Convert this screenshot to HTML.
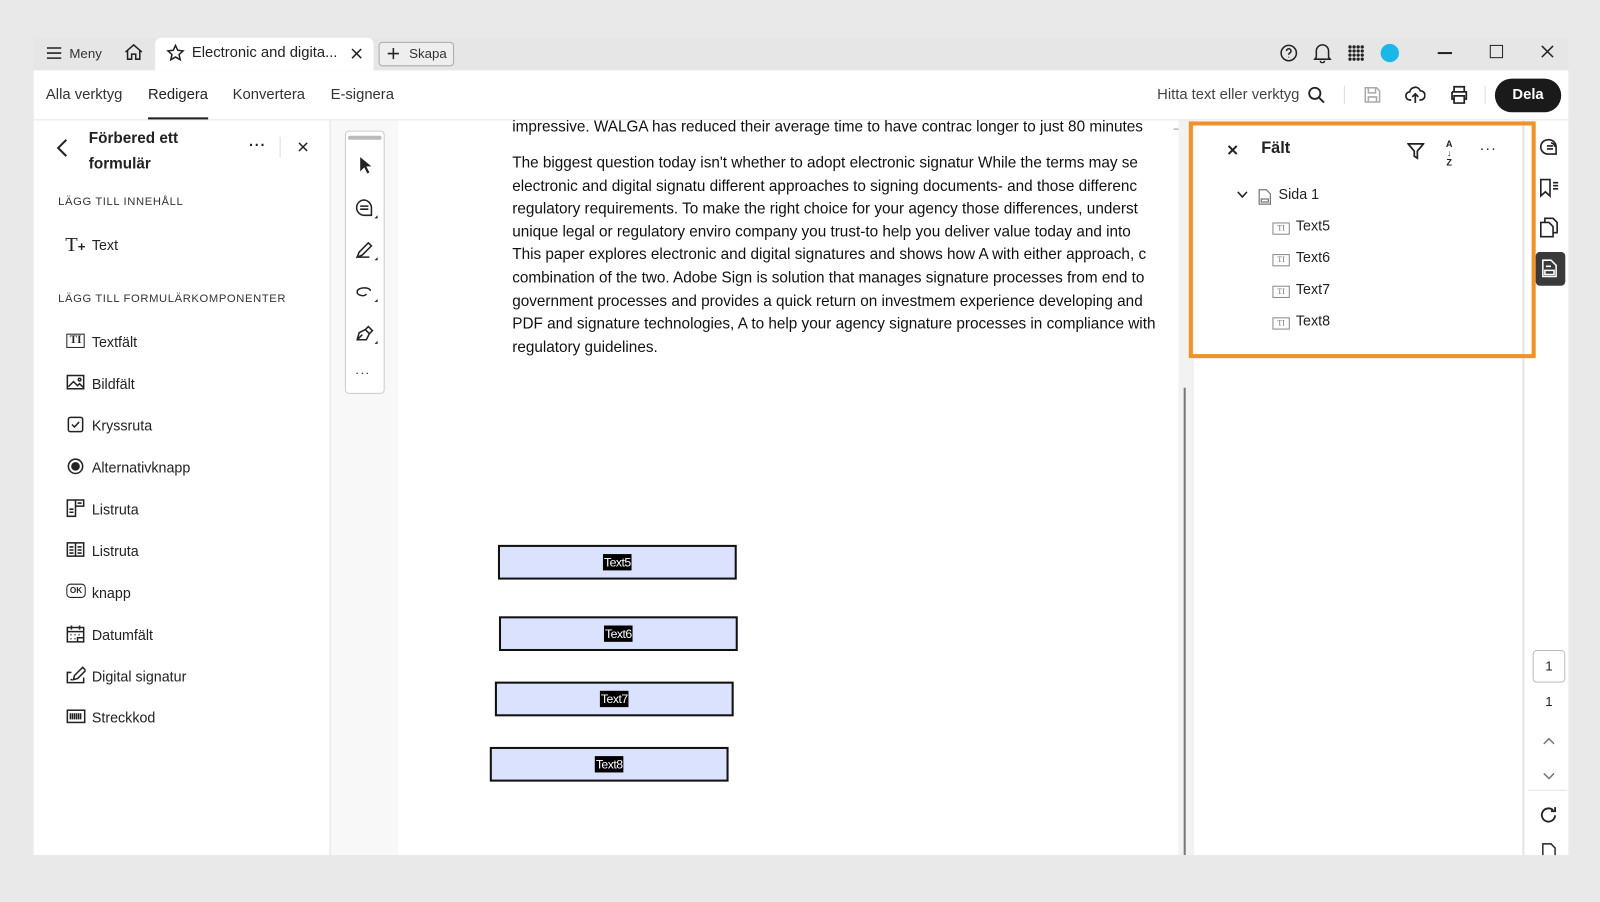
<!DOCTYPE html>
<html><head><meta charset="utf-8"><style>
*{box-sizing:border-box;margin:0;padding:0}
body{width:1600px;height:884px;background:#e9e9e9;font-family:"Liberation Sans",sans-serif;overflow:hidden;color:#222}
#w{position:absolute;left:0;top:0;width:1568px;height:866px;transform:scale(1.0204);transform-origin:0 0}
.abs{position:absolute}
svg{display:block}
.ic{position:absolute;fill:none;stroke:#222;stroke-width:1.5}
.li{position:absolute;left:90px;font-size:14px;color:#222}
.doc{position:absolute;left:502px;width:651px;font-family:"Liberation Sans",sans-serif;font-size:15px;color:#111;white-space:nowrap;overflow:hidden;line-height:22.6px}
.fld{position:absolute;height:34px;background:#dbe2fd;border:2px solid #111}
.fld span{position:absolute;left:50%;top:50%;transform:translate(-50%,-50%);background:#000;color:#fff;font-size:12px;padding:1px 1px;letter-spacing:-.5px}
.tr{position:absolute;left:1270px;font-size:14px;color:#222}
.tic{position:absolute;left:1247px;width:17px;height:12px;border:1.3px solid #888;font-size:8px;color:#777;text-align:center;line-height:9px;font-family:"Liberation Serif",serif}
</style></head><body><div id="w">
<div class="abs" style="left:33px;top:37px;width:1504px;height:32px;background:#e6e6e6"></div>
<div class="abs" style="left:33px;top:69px;width:1504px;height:49px;background:#fff;border-bottom:1px solid #e2e2e2"></div>
<div class="abs" style="left:152px;top:37px;width:214px;height:32px;background:#fff;border-radius:6px 6px 0 0"></div>
<svg class="ic" style="left:45px;top:45px" width="16" height="14"><path d="M1 2h14M1 7h14M1 12h14"/></svg>
<div class="abs" style="left:68px;top:45px;font-size:13px;color:#333">Meny</div>
<svg class="ic" style="left:121px;top:42px" width="20" height="18"><path d="M2 9L10 2l8 7M4 7v9h4v-5h4v5h4V7"/></svg>
<svg class="ic" style="left:163px;top:43px" width="18" height="18"><path d="M9 1.5l2.2 4.8 5.2.6-3.9 3.5 1.1 5.1L9 12.9l-4.6 2.6 1.1-5.1L1.6 6.9l5.2-.6z"/></svg>
<div class="abs" style="left:188px;top:44px;font-size:14.5px;color:#222">Electronic and digita...</div>
<svg class="ic" style="left:344px;top:47px" width="11" height="11"><path d="M1 1l9 9M10 1l-9 9"/></svg>
<div class="abs" style="left:371px;top:41px;width:74px;height:24px;border:1px solid #aaa;border-radius:4px;background:#eee"></div>
<svg class="ic" style="left:379px;top:46px" width="13" height="13"><path d="M6.5 1v11M1 6.5h11"/></svg>
<div class="abs" style="left:401px;top:45px;font-size:13px;color:#333">Skapa</div>
<svg class="ic" style="left:1254px;top:43px" width="18" height="18"><circle cx="9" cy="9" r="7.5"/><path d="M6.8 7a2.2 2.2 0 1 1 3 2c-.8.4-.8.9-.8 1.6M9 12.6v.6"/></svg>
<svg class="ic" style="left:1287px;top:42px" width="18" height="20"><path d="M3 14V8a6 6 0 0 1 12 0v6l1.5 2H1.5zM7 17.5a2 2 0 0 0 4 0"/></svg>
<svg style="position:absolute;left:1321px;top:44px" width="16" height="16"><g fill="#222"><circle cx="2" cy="2" r="1.6"/><circle cx="6" cy="2" r="1.6"/><circle cx="10" cy="2" r="1.6"/><circle cx="14" cy="2" r="1.6"/><circle cx="2" cy="6" r="1.6"/><circle cx="6" cy="6" r="1.6"/><circle cx="10" cy="6" r="1.6"/><circle cx="14" cy="6" r="1.6"/><circle cx="2" cy="10" r="1.6"/><circle cx="6" cy="10" r="1.6"/><circle cx="10" cy="10" r="1.6"/><circle cx="14" cy="10" r="1.6"/><circle cx="2" cy="14" r="1.6"/><circle cx="6" cy="14" r="1.6"/><circle cx="10" cy="14" r="1.6"/><circle cx="14" cy="14" r="1.6"/></g></svg>
<div class="abs" style="left:1353px;top:43px;width:18px;height:18px;border-radius:50%;background:#1ab8e8"></div>
<div class="abs" style="left:1409px;top:51px;width:14px;height:1.6px;background:#222"></div>
<div class="abs" style="left:1460px;top:44px;width:13px;height:13px;border:1.5px solid #222"></div>
<svg class="ic" style="left:1510px;top:44px" width="13" height="13"><path d="M1 1l11 11M12 1L1 12"/></svg>
<div class="abs" style="left:45px;top:85px;font-size:14.5px;color:#333">Alla verktyg</div>
<div class="abs" style="left:145px;top:85px;font-size:14.5px;color:#222">Redigera</div>
<div class="abs" style="left:145px;top:115px;width:59px;height:2px;background:#222"></div>
<div class="abs" style="left:228px;top:85px;font-size:14.5px;color:#333">Konvertera</div>
<div class="abs" style="left:324px;top:85px;font-size:14.5px;color:#333">E-signera</div>
<div class="abs" style="left:1134px;top:85px;font-size:14.5px;color:#444">Hitta text eller verktyg</div>
<svg class="ic" style="left:1281px;top:84px;stroke-width:1.8" width="18" height="18"><circle cx="7.5" cy="7.5" r="5.5"/><path d="M11.5 11.5l5 5"/></svg>
<div class="abs" style="left:1317px;top:84px;width:1px;height:18px;background:#ddd"></div>
<svg class="ic" style="left:1336px;top:84px;stroke:#aaa" width="18" height="18"><path d="M2 2h11l3 3v11H2zM5 2v5h7V2M5 16v-5h8v5"/></svg>
<svg class="ic" style="left:1377px;top:83px;stroke-width:1.7" width="20" height="20"><path d="M6 15H5a4 4 0 0 1-.5-8A5.5 5.5 0 0 1 15 6a4 4 0 0 1 0 9h-1M10 18V9M7 12l3-3 3 3"/></svg>
<svg class="ic" style="left:1420px;top:83px;stroke-width:1.7" width="20" height="20"><path d="M5 7V2h10v5M3 7h14v7h-2M5 14H3V7M5 11h10v7H5z"/></svg>
<div class="abs" style="left:1455px;top:84px;width:1px;height:18px;background:#ddd"></div>
<div class="abs" style="left:1465px;top:77px;width:65px;height:33px;border-radius:17px;background:#1a1a1a;color:#fff;font-weight:bold;font-size:14.5px;text-align:center;line-height:32px">Dela</div>

<div class="abs" style="left:33px;top:118px;width:291px;height:720px;background:#fff;border-right:1px solid #e0e0e0"></div>
<svg class="ic" style="left:55px;top:136px;stroke-width:2" width="12" height="18"><path d="M10 1L2 9l8 8"/></svg>
<div class="abs" style="left:87px;top:123px;font-size:15px;font-weight:bold;line-height:25px;color:#222">Förbered ett<br>formulär</div>
<div class="abs" style="left:244px;top:134px;font-size:14px;letter-spacing:1px;font-weight:bold">···</div>
<div class="abs" style="left:274px;top:134px;width:1px;height:20px;background:#ddd"></div>
<svg class="ic" style="left:292px;top:139px" width="10" height="10"><path d="M1 1l8 8M9 1L1 9"/></svg>
<div class="abs" style="left:57px;top:192px;font-size:11px;letter-spacing:.6px;color:#333">LÄGG TILL INNEHÅLL</div>
<div class="abs" style="left:64px;top:230px;font-family:'Liberation Serif',serif;font-size:20px;line-height:20px">T<span style="font-family:'Liberation Sans';font-size:13px;font-weight:bold">+</span></div>
<div class="li" style="top:232px">Text</div>
<div class="abs" style="left:57px;top:287px;font-size:11px;letter-spacing:.6px;color:#333">LÄGG TILL FORMULÄRKOMPONENTER</div>
<div class="abs" style="left:65px;top:327px;width:18px;height:14px;border:1.6px solid #222;font-family:'Liberation Serif',serif;font-weight:bold;font-size:11px;line-height:11px;text-align:center">TI</div>
<div class="li" style="top:327px">Textfält</div>
<svg class="ic" style="left:65px;top:367px" width="18" height="15"><rect x="1" y="1" width="16" height="13"/><path d="M2 12l5-5 4 4 2-2 4 4"/><circle cx="13" cy="5" r="1.3"/></svg>
<div class="li" style="top:368px">Bildfält</div>
<svg class="ic" style="left:66px;top:408px" width="16" height="16"><rect x="1" y="1" width="14" height="14" rx="2"/><path d="M4.5 8l2.5 2.5 4.5-5"/></svg>
<div class="li" style="top:409px">Kryssruta</div>
<svg class="ic" style="left:66px;top:449px" width="16" height="16"><circle cx="8" cy="8" r="7"/><circle cx="8" cy="8" r="3.5" fill="#222"/></svg>
<div class="li" style="top:450px">Alternativknapp</div>
<svg class="ic" style="left:65px;top:489px" width="18" height="18"><path d="M1 1h8v16H1zM9 1h8v6H9M3 10h4M3 13h4M11 4h4"/></svg>
<div class="li" style="top:491px">Listruta</div>
<svg class="ic" style="left:65px;top:531px" width="18" height="15"><rect x="1" y="1" width="16" height="13"/><path d="M9 1v13M3 5h4M3 8h4M3 11h4M11 5h4M11 8h4M11 11h4"/></svg>
<div class="li" style="top:532px">Listruta</div>
<div class="abs" style="left:65px;top:572px;width:19px;height:14px;border:1.6px solid #222;border-radius:4px;font-size:8px;font-weight:bold;text-align:center;line-height:11px">OK</div>
<div class="li" style="top:573px">knapp</div>
<svg class="ic" style="left:65px;top:612px" width="18" height="18"><path d="M1 3h16v14H1zM1 7h16M5 1v4M13 1v4M4 10h1M8 10h1M12 10h1M4 14h1M8 14h1M11 13h6v4h-6z"/></svg>
<div class="li" style="top:614px">Datumfält</div>
<svg class="ic" style="left:65px;top:652px" width="19" height="18"><path d="M5 7H1v10h16v-5M7 14l1-4 8-8 3 3-8 8zM4 14h2"/></svg>
<div class="li" style="top:655px">Digital signatur</div>
<svg class="ic" style="left:65px;top:695px" width="19" height="14"><rect x="1" y="1" width="17" height="12"/><path d="M4 4v6M6 4v6M8 4v6M10 4v6M12 4v6M14 4v6"/></svg>
<div class="li" style="top:695px">Streckkod</div>

<div class="abs" style="left:324px;top:118px;width:66px;height:720px;background:#f8f8f8"></div>
<div class="abs" style="left:338px;top:128px;width:39px;height:258px;background:#fff;border:1px solid #ccc;border-radius:4px"></div>
<div class="abs" style="left:341px;top:133px;width:33px;height:4px;background:#bbb;border-radius:2px"></div>
<svg style="position:absolute;left:351px;top:153px" width="14" height="18"><path d="M2 1v14l4-4 3 6 2-1-3-6h5z" fill="#222"/></svg>
<svg class="ic" style="left:347px;top:194px" width="24" height="22"><path d="M10 2a7.5 7.5 0 1 0 0 15h7v-6A8 8 0 0 0 10 2zM6 8h8M6 11h8"/><path d="M20 20h3v-3z" fill="#222" stroke="none"/></svg>
<svg class="ic" style="left:347px;top:235px" width="24" height="22"><path d="M3 17l2-5L14 3l3 3-9 9zM3 17h12" /><path d="M20 20h3v-3z" fill="#222" stroke="none"/></svg>
<svg class="ic" style="left:347px;top:276px" width="24" height="22"><path d="M16 9c0-4-13-4-13 1 0 4 8 5 9 2"/><path d="M20 20h3v-3z" fill="#222" stroke="none"/></svg>
<svg class="ic" style="left:347px;top:317px" width="24" height="22"><path d="M3 16l2-7 6-3 4 4-3 6zM11 6l3-3 4 4-3 3M3 16l5-5"/><path d="M20 20h3v-3z" fill="#222" stroke="none"/></svg>
<div class="abs" style="left:348px;top:358px;font-size:12px;letter-spacing:1px">···</div>

<div class="abs" style="left:390px;top:118px;width:765px;height:720px;background:#fff"></div>
<div class="doc" style="top:114px">impressive. WALGA has reduced their average time to have contrac longer to just 80 minutes</div>
<div class="abs" style="left:1150px;top:126px;width:16px;height:1px;background:#999"></div>
<div class="doc" style="top:149px">The biggest question today isn't whether to adopt electronic signatur While the terms may se<br>electronic and digital signatu different approaches to signing documents- and those differenc<br>regulatory requirements. To make the right choice for your agency those differences, underst<br>unique legal or regulatory enviro company you trust-to help you deliver value today and into<br>This paper explores electronic and digital signatures and shows how A with either approach, c<br>combination of the two. Adobe Sign is solution that manages signature processes from end to<br>government processes and provides a quick return on investmem experience developing and<br>PDF and signature technologies, A to help your agency signature processes in compliance with<br>regulatory guidelines.</div>
<div class="fld" style="left:488px;top:534px;width:234px"><span>Text5</span></div>
<div class="fld" style="left:489px;top:604px;width:234px"><span>Text6</span></div>
<div class="fld" style="left:485px;top:668px;width:234px"><span>Text7</span></div>
<div class="fld" style="left:480px;top:732px;width:234px"><span>Text8</span></div>
<div class="abs" style="left:1155px;top:118px;width:15px;height:720px;background:#f2f2f2"></div>
<div class="abs" style="left:1160px;top:380px;width:2px;height:458px;background:#777"></div>
<div class="abs" style="left:1177px;top:500px;width:3px;height:44px;background:#bbb;border-radius:2px"></div>

<div class="abs" style="left:1170px;top:118px;width:323px;height:720px;background:#fff;border-right:1px solid #ddd"></div>
<div class="abs" style="left:1494px;top:118px;width:43px;height:720px;background:#fff"></div>
<div class="abs" style="left:1165px;top:119px;width:340px;height:232px;border:4px solid #f0922a"></div>
<svg class="ic" style="left:1203px;top:142px;stroke-width:2" width="10" height="10"><path d="M1 1l8 8M9 1L1 9"/></svg>
<div class="abs" style="left:1236px;top:137px;font-size:16px;font-weight:bold">Fält</div>
<svg class="ic" style="left:1379px;top:140px;stroke-width:1.7" width="17" height="17"><path d="M1 1h15l-6 7v7l-3-2V8z"/></svg>
<div class="abs" style="left:1417px;top:137px;font-size:9px;font-weight:bold;line-height:9px;text-align:center">A<br>↓<br>Z</div>
<div class="abs" style="left:1450px;top:137px;font-size:14px;letter-spacing:1px">···</div>
<svg class="ic" style="left:1212px;top:187px" width="11" height="8"><path d="M1 1l4.5 5L10 1"/></svg>
<svg class="ic" style="left:1233px;top:185px;stroke:#777;stroke-width:1.2" width="13" height="16"><path d="M1 1h7l4 4v10H1zM3 10h7v3H3z"/></svg>
<div class="tr" style="left:1253px;top:182px">Sida 1</div>
<div class="tic" style="top:218px">TI</div><div class="tr" style="top:213px">Text5</div>
<div class="tic" style="top:249px">TI</div><div class="tr" style="top:244px">Text6</div>
<div class="tic" style="top:280px">TI</div><div class="tr" style="top:275px">Text7</div>
<div class="tic" style="top:311px">TI</div><div class="tr" style="top:306px">Text8</div>

<svg class="ic" style="left:1508px;top:135px;stroke-width:1.6" width="20" height="18"><path d="M9 2a7 7 0 1 0 0 14h8V9A7 7 0 0 0 9 2z"/><path d="M12 5a5 5 0 0 1 4 4M8 8h6M8 11h6"/></svg>
<svg class="ic" style="left:1508px;top:174px;stroke-width:1.6" width="20" height="20"><path d="M2 2h9v16l-4.5-4L2 18zM14 5h5M14 8h5M14 11h5"/></svg>
<svg class="ic" style="left:1509px;top:213px;stroke-width:1.6" width="18" height="20"><path d="M5 5V1h8l4 4v10h-4M1 5h8l4 4v10H1z"/></svg>
<div class="abs" style="left:1505px;top:247px;width:29px;height:33px;background:#3a3a3a;border-radius:4px"></div>
<svg class="ic" style="left:1511px;top:254px;stroke:#fff;stroke-width:1.5" width="15" height="18"><path d="M1 1h8l5 5v11H1zM3 11h9v4H3zM4 7h5"/></svg>
<div class="abs" style="left:1502px;top:637px;width:32px;height:32px;border:1px solid #bbb;border-radius:4px;font-size:13px;text-align:center;line-height:30px">1</div>
<div class="abs" style="left:1502px;top:680px;width:32px;font-size:13px;text-align:center">1</div>
<svg class="ic" style="left:1512px;top:722px;stroke:#777" width="12" height="8"><path d="M1 7l5-5 5 5"/></svg>
<svg class="ic" style="left:1512px;top:757px;stroke:#777" width="12" height="8"><path d="M1 1l5 5 5-5"/></svg>
<div class="abs" style="left:1498px;top:774px;width:38px;height:1px;background:#e4e4e4"></div>
<svg class="ic" style="left:1509px;top:790px;stroke-width:1.8" width="18" height="18"><path d="M15 9a6.5 6.5 0 1 1-2-5M15 1v4h-4"/></svg>
<svg class="ic" style="left:1511px;top:826px;stroke-width:1.4" width="15" height="14"><path d="M1 14V1h8l4 4v9"/></svg>
<div class="abs" style="left:0;top:838px;width:1568px;height:46px;background:#e9e9e9"></div>
</div></body></html>
